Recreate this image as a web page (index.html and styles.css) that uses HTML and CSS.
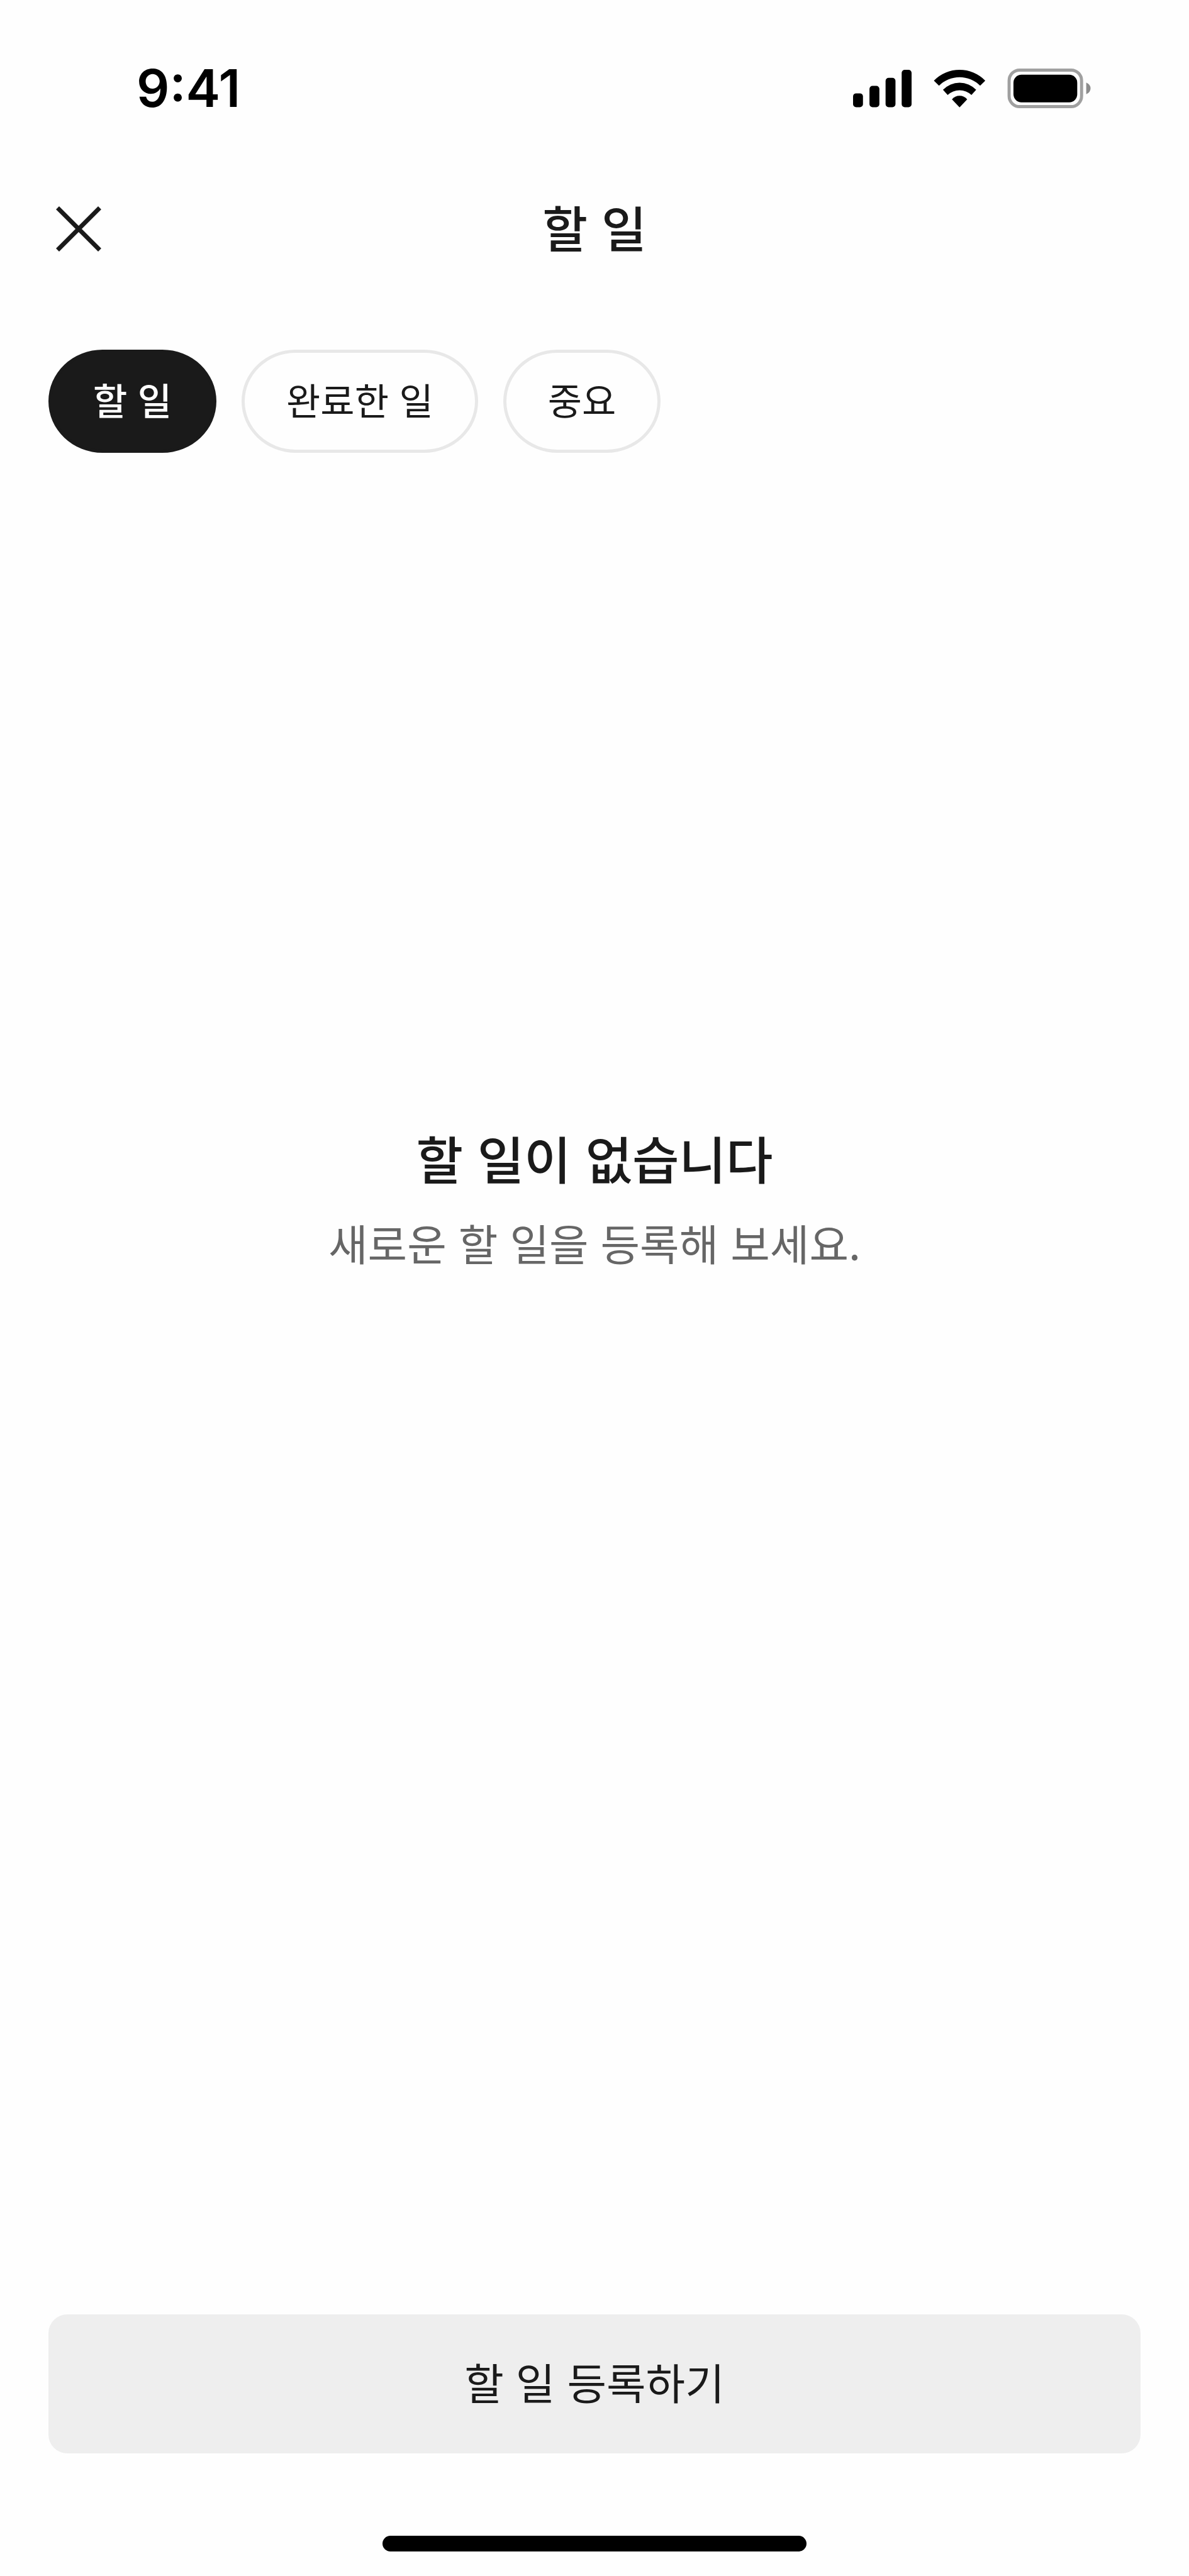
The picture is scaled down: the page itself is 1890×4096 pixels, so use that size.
FILE: index.html
```html
<!DOCTYPE html>
<html lang="ko">
  <head>
    <meta charset="UTF-8" />
    <meta name="viewport" content="width=device-width, initial-scale=1" />
    <title>할 일</title>
    <link rel="stylesheet" href="styles.css">
  </head>
  <body>
    <div class="page">
      <div class="status">
        <span class="time">9:41</span>
        <svg class="status-icons" viewBox="0 0 384 64" aria-hidden="true">
          <!-- signal -->
          <rect x="0" y="40" width="16" height="22.5" rx="5" />
          <rect x="26.5" y="28" width="16" height="34.5" rx="5" />
          <rect x="52.5" y="15" width="16" height="47.5" rx="5" />
          <rect x="78.5" y="2" width="16" height="60.5" rx="5" />
          <!-- wifi -->
          <path d="M130.5 19.5A58 58 0 0 1 213.5 19.5L205.2 27.7A47 47 0 0 0 138.8 27.7Z" />
          <path d="M145.2 34.3A37 37 0 0 1 198.8 34.3L191.2 42.7A28 28 0 0 0 152.8 42.7Z" />
          <path d="M159.7 49.7A16 16 0 0 1 184.3 49.7L172 62.7Z" />
          <!-- battery -->
          <rect class="battery-line" x="252" y="2.5" width="117" height="59" rx="17" />
          <rect x="259" y="10" width="103" height="44.5" rx="13" />
          <path class="battery-cap" d="M376.5 22.5Q383.5 25.5 383.5 32T376.5 41.5Z" />
        </svg>
      </div>
      <header class="header">
        <button class="close" type="button" aria-label="닫기">
          <svg viewBox="0 0 72 72">
            <path d="M2.5 2.5L69.5 69.5M69.5 2.5L2.5 69.5" />
          </svg>
        </button>
        <h1>할 일</h1>
      </header>
      <nav class="tabs">
        <button class="tab active" type="button">할 일</button>
        <button class="tab" type="button">완료한 일</button>
        <button class="tab" type="button">중요</button>
      </nav>
      <main class="empty">
        <h2>할 일이 없습니다</h2>
        <p>새로운 할 일을 등록해 보세요.</p>
      </main>
      <footer class="footer">
        <button class="add" type="button">할 일 등록하기</button>
        <div class="home-bar"></div>
      </footer>
    </div>
  </body>
</html>
```
FILE: styles.css
```css
* {
  box-sizing: border-box;
}
body {
  margin: 0;
  background: #fefefe;
  color: #1a1a1a;
  font-family: "Noto Sans CJK KR", sans-serif;
}
button {
  border: none;
  padding: 0;
  background: none;
  color: inherit;
  font-family: inherit;
}
h1,
h2,
p {
  margin: 0;
}
.page {
  display: flex;
  flex-direction: column;
  min-height: 100vh;
}
.status {
  display: flex;
  align-items: center;
  justify-content: space-between;
  height: 280px;
  padding: 0 156px 0 217px;
  color: #000;
}
.time {
  font-family: Inter, sans-serif;
  font-size: 82px;
  font-weight: 600;
}
.status-icons {
  width: 378px;
  height: 63px;
}
.battery-line {
  fill: none;
  stroke: #a0a0a0;
  stroke-width: 5;
}
.battery-cap {
  fill: #8c8c8c;
}
.header {
  display: grid;
  grid-template-columns: 72px 1fr 72px;
  align-items: center;
  height: 168px;
  padding: 0 89px;
}
.close {
  width: 72px;
  height: 72px;
}
.close svg {
  display: block;
  stroke: #1a1a1a;
  stroke-width: 7;
}
.header h1 {
  padding-bottom: 8px;
  text-align: center;
  font-size: 78px;
  font-weight: 500;
  line-height: 120px;
}
.tabs {
  display: flex;
  gap: 40px;
  padding: 108px 77px 0;
}
.tab {
  height: 164px;
  padding: 0 66px 6px;
  border: 5px solid #e8e8e8;
  border-radius: 86px / 82px;
  font-size: 59px;
  line-height: 80px;
}
.tab.active {
  border-color: #1a1a1a;
  background: #1a1a1a;
  color: #fff;
  font-weight: 500;
}
.empty {
  flex: 1;
  padding-top: 1060px;
  text-align: center;
}
.empty h2 {
  font-size: 81px;
  font-weight: 500;
  line-height: 120px;
}
.empty p {
  margin-top: 24px;
  color: #666;
  font-size: 68px;
  line-height: 104px;
}
.footer {
  padding: 0 77px 39px;
}
.add {
  display: block;
  width: 100%;
  height: 221px;
  padding-bottom: 8px;
  border-radius: 30px;
  background: #eee;
  font-size: 68px;
}
.home-bar {
  width: 674px;
  height: 25px;
  margin: 131px auto 0;
  border-radius: 13px;
  background: #000;
}
```
